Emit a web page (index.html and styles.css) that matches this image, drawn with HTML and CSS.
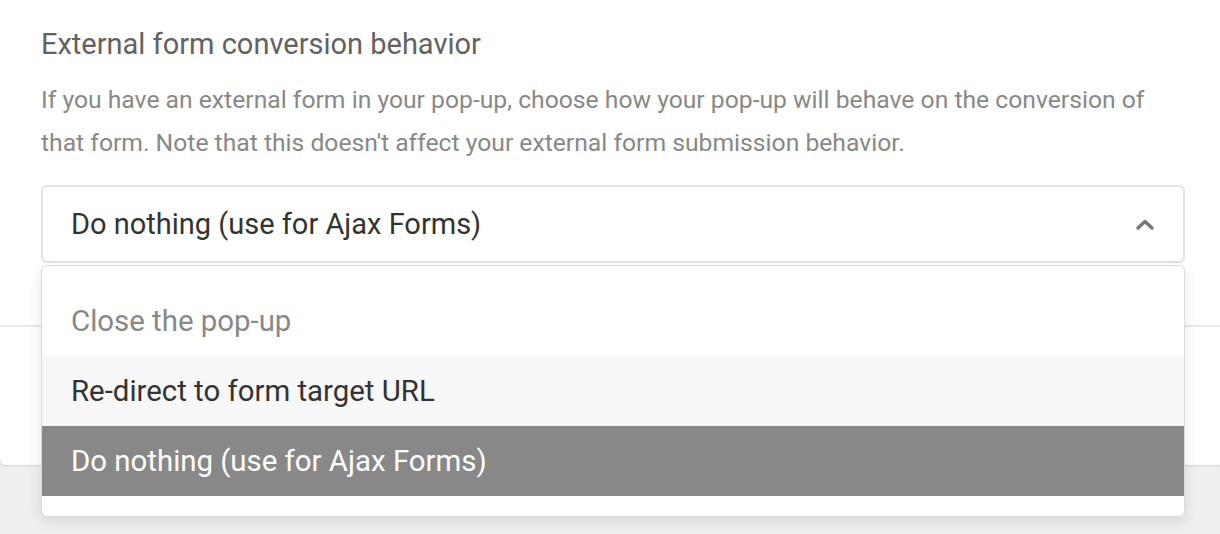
FILE: index.html
```html
<!DOCTYPE html>
<html lang="en">
<head>
    <meta charset="UTF-8">
    <title>External form conversion behavior</title>
    <link rel="stylesheet" href="styles.css">
</head>
<body>
    <div class="card">
        <div class="card-body">
            <h2 class="field-title">External form conversion behavior</h2>
            <p class="field-help">If you have an external form in your pop-up, choose how your pop-up will behave on the conversion of that form. Note that this doesn't affect your external form submission behavior.</p>
            <div class="select">
                <div class="select-value">
                    <span>Do nothing (use for Ajax Forms)</span>
                    <svg class="chevron" width="22" height="14" viewBox="0 0 22 14">
                        <path d="M4 11 L11 4.5 L18 11" fill="none" stroke="#777" stroke-width="3.5" stroke-linecap="round" stroke-linejoin="round"/>
                    </svg>
                </div>
                <ul class="select-menu">
                    <li class="option option-muted">Close the pop-up</li>
                    <li class="option option-hover">Re-direct to form target URL</li>
                    <li class="option option-selected">Do nothing (use for Ajax Forms)</li>
                </ul>
            </div>
        </div>
        <div class="card-footer"></div>
    </div>
</body>
</html>
```

FILE: styles.css
```css
body {
    margin: 0;
    padding: 0;
    background: #efefef;
    font-family: "Roboto", "Liberation Sans", sans-serif;
    height: 534px;
    overflow: hidden;
}
.card {
    background: #fff;
    border-radius: 0 0 6px 6px;
    box-shadow: 0 1px 2px rgba(0, 0, 0, 0.12);
    margin-right: -4px;
}
.card-body {
    padding: 28px 39px 62px 41px;
}
.field-title {
    margin: 0;
    font-size: 29px;
    line-height: 32px;
    font-weight: 400;
    color: #626262;
}
.field-help {
    max-width: 1135px;
    margin: 18px 0 0;
    font-size: 24.7px;
    line-height: 43px;
    color: #888;
}
.select {
    position: relative;
    margin-top: 21px;
}
.select-value {
    display: flex;
    align-items: center;
    justify-content: space-between;
    height: 74px;
    padding: 0 27px 0 28px;
    border: 2px solid #e2e2e2;
    border-radius: 6px;
    font-size: 29px;
    color: #333;
}
.chevron {
    display: block;
}
.select-menu {
    position: absolute;
    top: 80px;
    left: 0;
    right: 0;
    margin: 0;
    padding: 20px 0;
    list-style: none;
    background: #fff;
    border: 1px solid #dcdcdc;
    border-radius: 6px;
    box-shadow: 0 4px 14px rgba(0, 0, 0, 0.1);
    z-index: 2;
}
.option {
    height: 70px;
    line-height: 70px;
    padding-left: 29px;
    font-size: 29.4px;
    color: #333;
}
.option-muted {
    color: #888;
}
.option-hover {
    background: #f7f7f7;
}
.option-selected {
    background: #888;
    color: #fff;
}
.card-footer {
    height: 138px;
    border-top: 2px solid #e8e8e8;
}
```
